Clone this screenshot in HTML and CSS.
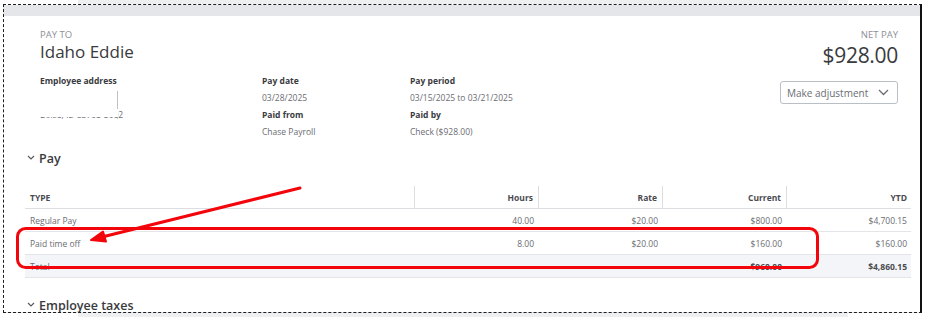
FILE: index.html
```html
<!DOCTYPE html>
<html>
<head>
<meta charset="utf-8">
<link rel="stylesheet" href="styles.css">
</head>
<body>
<div class="frame">
  <div class="band"></div>
  <div class="content">
    <div class="head">
      <div class="payto">
        <div class="caps">PAY TO</div>
        <div class="name">Idaho Eddie</div>
      </div>
      <div class="netpay">
        <div class="caps">NET PAY</div>
        <div class="amount">$928.00</div>
      </div>
    </div>
    <div class="details">
      <div class="col col-addr">
        <div class="lbl">Employee address</div>
        <div class="addr">
          <span class="addr-line"></span>
          <span class="addr-text"><span class="redact">Boise, ID 83705-500</span>2</span>
        </div>
      </div>
      <div class="col col-date">
        <div class="lbl">Pay date</div>
        <div class="val">03/28/2025</div>
        <div class="lbl">Paid from</div>
        <div class="val">Chase Payroll</div>
      </div>
      <div class="col col-period">
        <div class="lbl">Pay period</div>
        <div class="val">03/15/2025 to 03/21/2025</div>
        <div class="lbl">Paid by</div>
        <div class="val">Check ($928.00)</div>
      </div>
      <div class="col col-adj">
        <div class="dropdown">
          <span>Make adjustment</span>
          <svg width="11" height="7" viewBox="0 0 11 7"><path d="M1 1l4.5 4.5L10 1" fill="none" stroke="#6b6c72" stroke-width="1.3"/></svg>
        </div>
      </div>
    </div>
  </div>
  <div class="section">
    <div class="sec-title">
      <svg class="chev" width="8" height="5" viewBox="0 0 8 5"><path d="M1 1l3 3 3-3" fill="none" stroke="#555" stroke-width="1.1"/></svg>
      <span>Pay</span>
    </div>
    <div class="table">
      <div class="tr th">
        <div class="c c-type">TYPE</div>
        <div class="c c-num">Hours</div>
        <div class="c c-num">Rate</div>
        <div class="c c-num">Current</div>
        <div class="c c-num last">YTD</div>
      </div>
      <div class="tr">
        <div class="c c-type">Regular Pay</div>
        <div class="c c-num">40.00</div>
        <div class="c c-num">$20.00</div>
        <div class="c c-num">$800.00</div>
        <div class="c c-num last">$4,700.15</div>
      </div>
      <div class="tr">
        <div class="c c-type">Paid time off</div>
        <div class="c c-num">8.00</div>
        <div class="c c-num">$20.00</div>
        <div class="c c-num">$160.00</div>
        <div class="c c-num last">$160.00</div>
      </div>
      <div class="tr total">
        <div class="c c-type">Total</div>
        <div class="c c-num"></div>
        <div class="c c-num"></div>
        <div class="c c-num strong">$960.00</div>
        <div class="c c-num last strong">$4,860.15</div>
      </div>
    </div>
    <div class="sec-title sec-taxes">
      <svg class="chev" width="8" height="5" viewBox="0 0 8 5"><path d="M1 1l3 3 3-3" fill="none" stroke="#555" stroke-width="1.1"/></svg>
      <span>Employee taxes</span>
    </div>
  </div>
</div>
<svg class="annot" width="928" height="317" viewBox="0 0 928 317">
  <rect x="17.5" y="228.5" width="800" height="39" rx="8" ry="8" fill="none" stroke="#f2060b" stroke-width="3"/>
  <line x1="300" y1="188" x2="102" y2="237" stroke="#f2060b" stroke-width="3" stroke-linecap="round"/>
  <path d="M91 240 L103 231.5 L106 241.5 Z" fill="#f2060b" stroke="#f2060b" stroke-width="2" stroke-linejoin="round"/>
</svg>
</body>
</html>
```

FILE: styles.css
```css
html, body {
  margin: 0;
  padding: 0;
}
body {
  width: 928px;
  height: 317px;
  overflow: hidden;
  position: relative;
  background: linear-gradient(to right, #fff 78px, #eeeff1 78px, #eeeff1 848px, #fff 848px);
  font-family: "Open Sans", "Lato", sans-serif;
  color: #393a3d;
}
.frame {
  position: relative;
  margin: 4px 0 0 3px;
  width: 916px;
  height: 307px;
  border: 1px dashed #1e1e1e;
  border-right: 2px solid #111;
  overflow: hidden;
  background: linear-gradient(#e4e6e9 0, #e4e6e9 11px, #fff 11px);
}
.band {
  display: block;
  height: 11px;
  background-color: #e4e6e9;
}
.content {
  padding: 13px 22px 0 36px;
}
.head {
  display: flex;
  justify-content: space-between;
}
.caps {
  font-size: 9.5px;
  line-height: 12px;
  color: #8d9096;
}
.name {
  font-size: 17px;
  line-height: 22px;
  color: #393a3d;
}
.netpay {
  text-align: right;
}
.amount {
  font-size: 21px;
  line-height: 28px;
  letter-spacing: -0.3px;
  color: #393a3d;
}
.details {
  display: grid;
  grid-template-columns: 222px 148px 1fr 118px;
  margin-top: 3px;
}
.lbl {
  font-size: 8.5px;
  line-height: 17px;
  font-weight: 700;
  color: #393a3d;
}
.val {
  font-size: 8.5px;
  line-height: 17px;
  color: #6b6c72;
}
.addr {
  position: relative;
  height: 34px;
}
.addr-line {
  position: absolute;
  left: 77px;
  top: 2px;
  width: 1px;
  height: 28px;
  background: #bfc1c5;
}
.addr-text {
  position: absolute;
  left: 0;
  top: 20px;
  font-size: 8.5px;
  line-height: 12px;
  color: #6b6c72;
}
.redact {
  position: relative;
}
.redact::after {
  content: "";
  position: absolute;
  left: -1px;
  right: 0;
  top: 0;
  height: 8px;
  background: #fff;
}
.col-adj {
  padding-top: 9px;
}
.dropdown {
  box-sizing: border-box;
  height: 23px;
  border: 1px solid #babec5;
  border-radius: 3px;
  display: flex;
  align-items: center;
  justify-content: space-between;
  padding: 0 8px 0 6px;
  font-size: 10px;
  color: #6b6c72;
}
.section {
  padding: 8px 9px 0 21px;
}
.sec-title {
  display: flex;
  align-items: center;
  height: 20px;
  font-size: 12.5px;
  font-weight: 600;
  color: #393a3d;
}
.sec-title .chev {
  margin: 0 4px 2px 2px;
}
.table {
  margin-top: 18px;
}
.tr {
  display: flex;
  height: 22px;
  border-bottom: 1px solid #e3e5e8;
  font-size: 8.5px;
  color: #6b6c72;
}
.th {
  font-weight: 700;
  color: #4a4b50;
  border-bottom-color: #dcdee2;
}
.c {
  display: flex;
  align-items: center;
  box-sizing: border-box;
}
.c-type {
  width: 390px;
  padding-left: 5px;
}
.c-num {
  width: 124px;
  justify-content: flex-end;
  padding-right: 5px;
}
.c-num.last {
  width: 124px;
  padding-right: 4px;
}
.th .c-type,
.th .c-num:not(.last) {
  border-right: 1px solid #dcdee2;
}
.total {
  background: #f4f5f8;
}
.strong {
  font-weight: 700;
  color: #4a4b50;
}
.sec-taxes {
  margin-top: 17px;
}
.annot {
  position: absolute;
  left: 0;
  top: 0;
  pointer-events: none;
}
```
